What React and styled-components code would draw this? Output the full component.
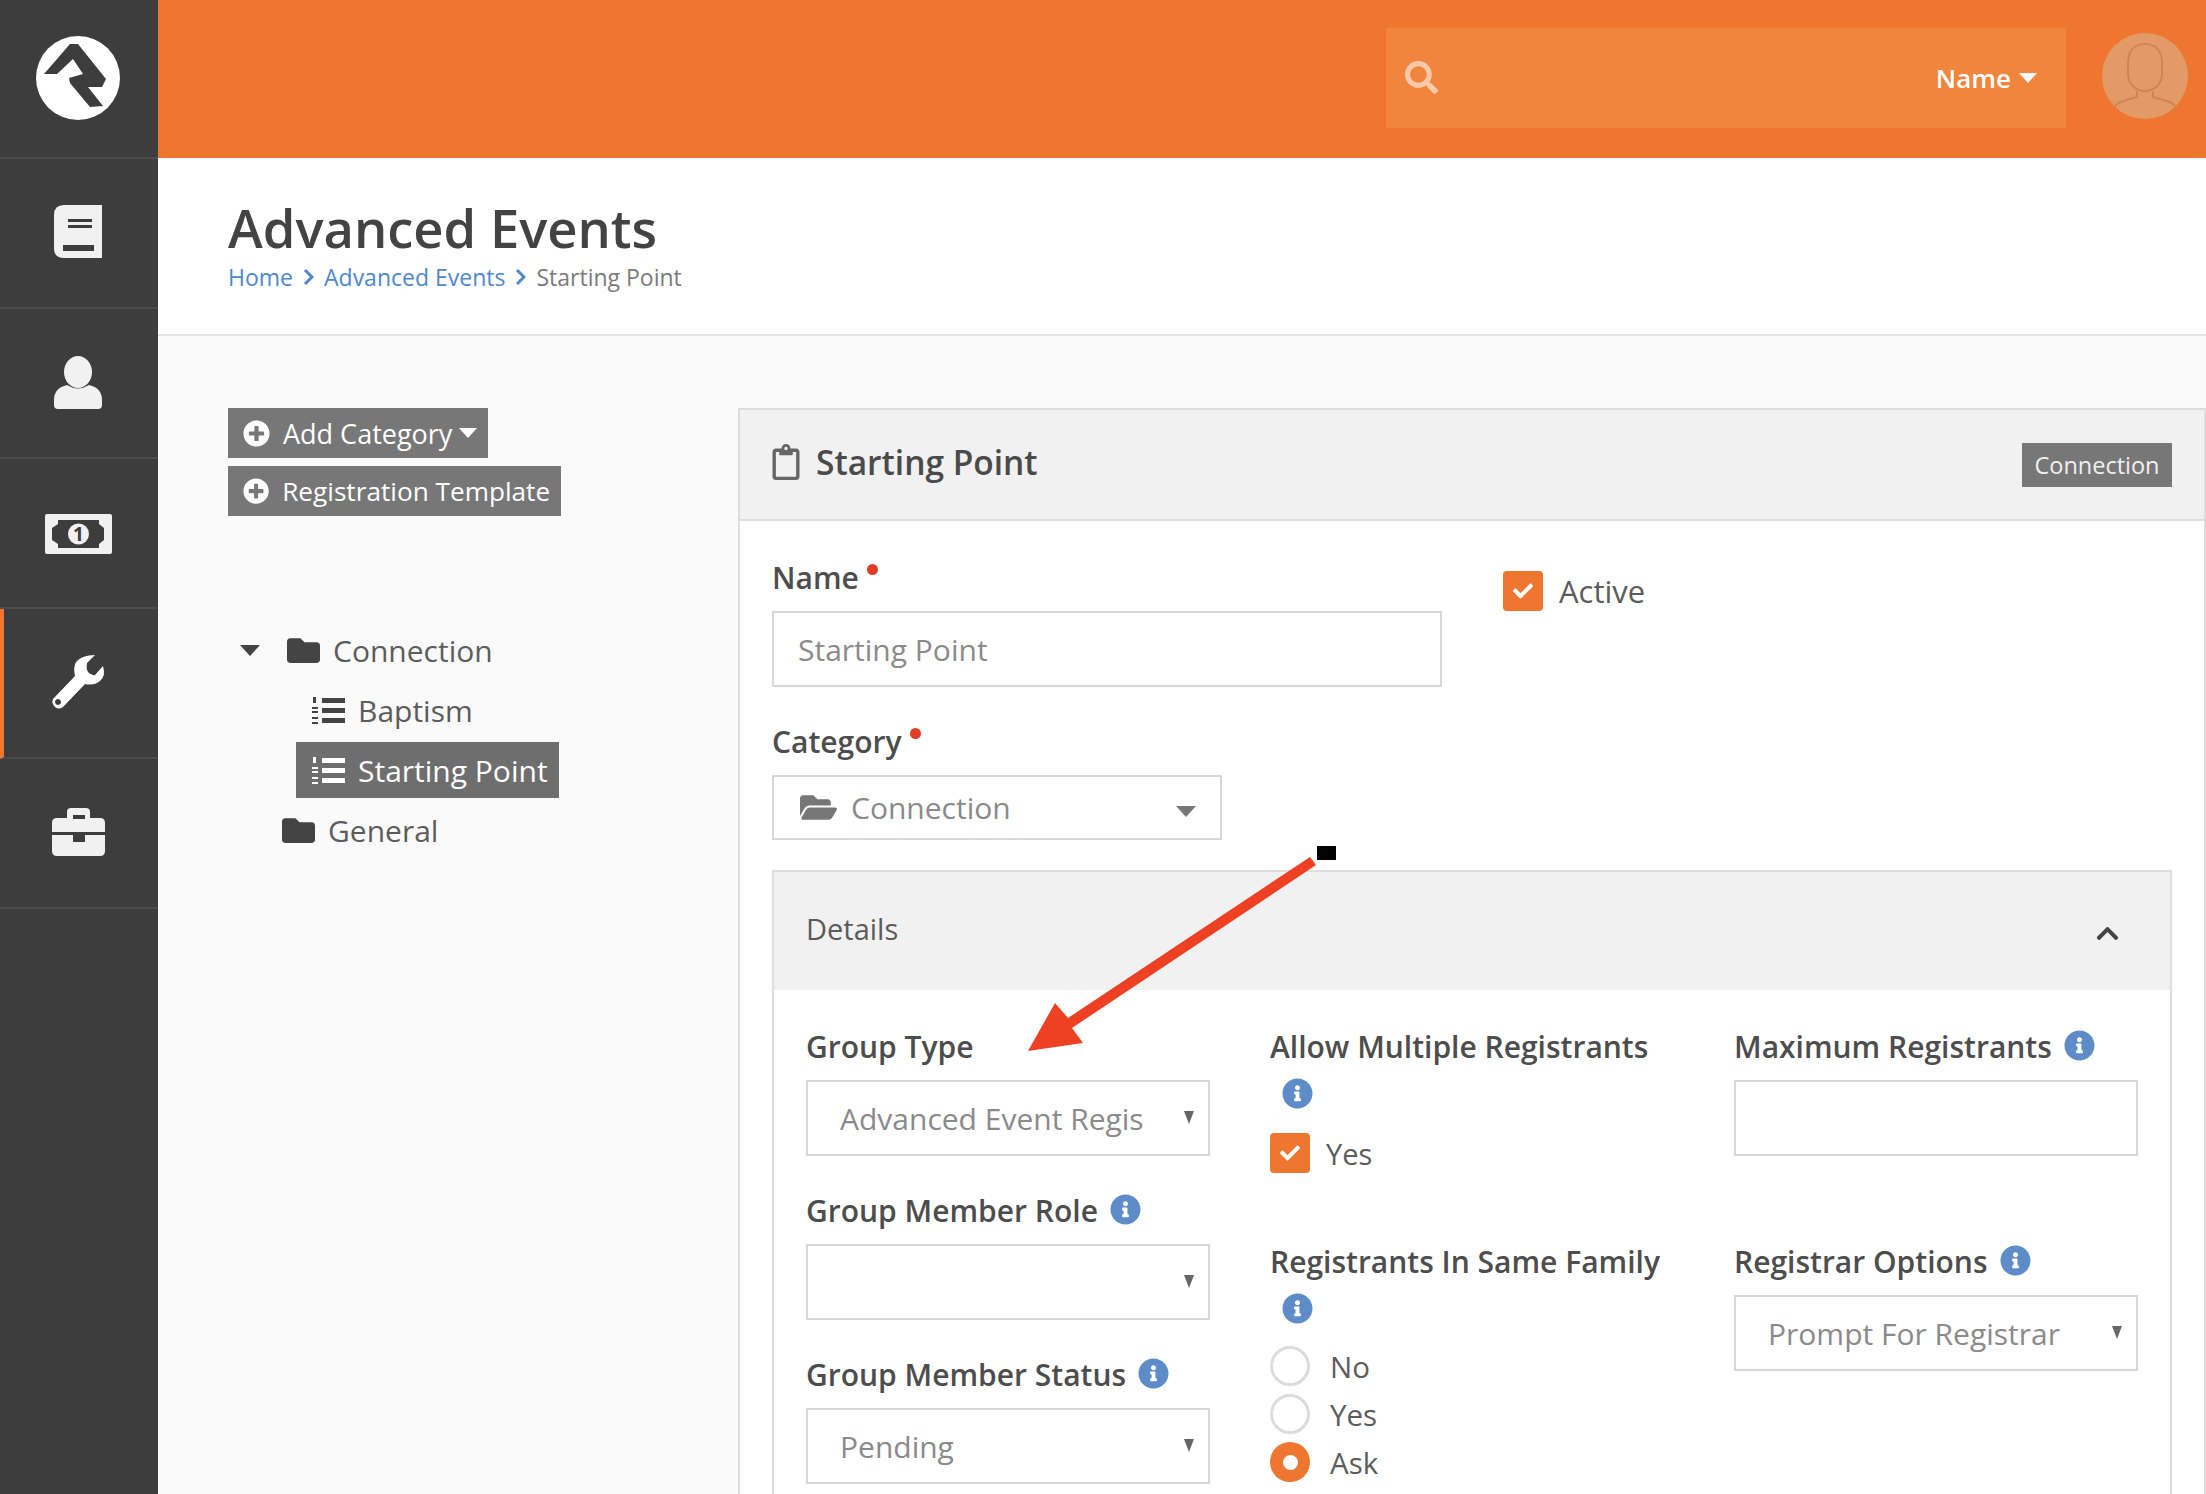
import React from "react";
import styled, { createGlobalStyle } from "styled-components";
import {
  FaPlusCircle,
  FaFolder,
  FaFolderOpen,
  FaSearch,
  FaInfoCircle,
  FaCheck,
  FaRegClipboard,
  FaChevronUp,
} from "react-icons/fa";

const GlobalStyle = createGlobalStyle`
  html, body {
    margin: 0;
    height: 100%;
    overflow: hidden;
    background: #fafafa;
    font-family: "Open Sans", "Noto Sans", sans-serif;
    color: #4a4a4a;
  }
  * { box-sizing: border-box; }
`;

const Shell = styled.div`
  display: flex;
  height: 100vh;
  overflow: hidden;
`;

const Sidebar = styled.nav`
  width: 158px;
  flex: none;
  background: #3d3d3d;
`;

const NavCell = styled.div`
  height: ${(p) => (p.$logo ? "159px" : "150px")};
  display: flex;
  align-items: center;
  justify-content: center;
  border-bottom: 2px solid #4b4b4b;
  border-left: ${(p) => (p.$active ? "4px solid #ee762f" : "none")};
  padding: ${(p) => p.$pad || "0 0 2px"};
  padding-right: ${(p) => (p.$active ? "7px" : "2px")};
`;

const Main = styled.div`
  flex: 1;
  min-width: 0;
  display: flex;
  flex-direction: column;
`;

const TopBar = styled.header`
  height: 158px;
  flex: none;
  background: #ee762f;
  display: flex;
  align-items: center;
  justify-content: flex-end;
  gap: 36px;
  padding: 0 18px 3px 0;
`;

const SearchBox = styled.div`
  width: 680px;
  height: 100px;
  background: #f2853d;
  display: flex;
  align-items: center;
  justify-content: space-between;
  padding: 0 29px 0 19px;
  color: #f9c9a9;
  font-size: 33px;
`;

const SearchScope = styled.span`
  display: flex;
  align-items: center;
  gap: 8px;
  color: #fff;
  font-size: 26px;
  font-weight: 600;
`;

const Caret = styled.span`
  display: inline-block;
  flex: none;
  width: 0;
  height: 0;
  margin-top: ${(p) => p.$drop || 0}px;
  margin-left: ${(p) => p.$pull || 0}px;
  border-left: ${(p) => p.$size || 9}px solid transparent;
  border-right: ${(p) => p.$size || 9}px solid transparent;
  border-top: ${(p) => (p.$size || 9) + 1}px solid ${(p) => p.$color || "#fff"};
`;

const AvatarSvg = styled.svg`
  flex: none;
  margin-bottom: 3px;
`;

const PageHeader = styled.div`
  height: 178px;
  flex: none;
  background: #fff;
  border-bottom: 2px solid #e4e4e4;
  padding: 40px 0 0 70px;
`;

const PageTitle = styled.h1`
  margin: 0;
  font-size: 52.5px;
  line-height: 60px;
  font-weight: 600;
  color: #434343;
`;

const Breadcrumb = styled.div`
  display: flex;
  align-items: center;
  gap: 10px;
  margin-top: 3px;
  font-size: 23px;
  line-height: 32px;
  color: #7b7b7b;
`;

const Crumb = styled.a`
  color: #4f87cf;
`;

const CrumbSep = styled.svg`
  width: 11px;
  height: 18px;
  fill: none;
  stroke: #4f87cf;
  stroke-width: 3;
`;

const Content = styled.div`
  flex: 1;
  min-height: 0;
  display: flex;
  padding: 72px 0 0 70px;
`;

const LeftColumn = styled.div`
  width: 510px;
  flex: none;
  display: flex;
  flex-direction: column;
  align-items: flex-start;
`;

const ActionButton = styled.div`
  height: 50px;
  display: flex;
  align-items: center;
  gap: 13px;
  padding: 0 11px 0 15px;
  margin-bottom: 8px;
  background: #777;
  color: #fff;
  font-size: ${(p) => p.$size || 26.2}px;
  white-space: nowrap;
`;

const Tree = styled.div`
  margin-top: 98px;
  display: flex;
  flex-direction: column;
  gap: 4px;
`;

const TreeRow = styled.div`
  height: 56px;
  align-self: flex-start;
  display: flex;
  align-items: center;
  gap: 13px;
  margin-left: ${(p) => p.$indent || 0}px;
  padding: ${(p) => (p.$selected ? "0 11px 0 16px" : "0")};
  background: ${(p) => (p.$selected ? "#6e6e6e" : "transparent")};
  color: ${(p) => (p.$selected ? "#fff" : "#5c5c5c")};
  font-size: 30px;
  svg { flex: none; font-size: 33px; color: ${(p) => (p.$selected ? "#fff" : "#444")}; }
`;

const TreeToggle = styled.span`
  width: 47px;
  margin-right: -13px;
  display: flex;
`;

const Panel = styled.section`
  flex: 1;
  min-width: 0;
  border: 2px solid #ddd;
  border-bottom: none;
  background: #fff;
`;

const PanelHeader = styled.div`
  height: 111px;
  display: flex;
  align-items: center;
  justify-content: space-between;
  padding: 0 32px 0 28px;
  background: #f1f1f1;
  border-bottom: 2px solid #ddd;
`;

const PanelTitle = styled.h2`
  margin: 0 0 5px;
  display: flex;
  align-items: center;
  gap: 12px;
  font-size: 33.5px;
  font-weight: 600;
  color: #4a4a4a;
  svg { font-size: 36px; font-weight: 400; color: #666; }
`;

const Badge = styled.span`
  width: 150px;
  height: 44px;
  display: flex;
  align-items: center;
  justify-content: center;
  background: #777;
  color: #f0f0f0;
  font-size: 23.5px;
`;

const PanelBody = styled.div`
  padding: 36px 32px 0;
`;

const TopRow = styled.div`
  display: flex;
  gap: 61px;
`;

const Field = styled.div`
  width: ${(p) => p.$width || "100%"};
  margin-top: ${(p) => p.$top || 0}px;
`;

const Label = styled.label`
  display: flex;
  align-items: center;
  gap: 12px;
  height: 40px;
  margin-bottom: 14px;
  font-size: 30px;
  font-weight: 600;
  color: #4d4d4d;
  white-space: nowrap;
`;

const Required = styled.span`
  width: 11px;
  height: 11px;
  margin: -16px 0 0 -4px;
  border-radius: 50%;
  background: #e03c26;
`;

const TextInput = styled.input`
  display: block;
  width: 100%;
  height: ${(p) => p.$height || 76}px;
  padding: 0 24px;
  border: 2px solid #d8d8d8;
  background: #fff;
  font: inherit;
  font-size: 30px;
  color: #8a8a8a;
  outline: none;
`;

const SelectBox = styled.div`
  height: ${(p) => p.$height || 76}px;
  display: flex;
  align-items: center;
  justify-content: space-between;
  gap: 14px;
  padding: 0 ${(p) => p.$right || 14}px 0 ${(p) => p.$left || 32}px;
  border: 2px solid #d8d8d8;
  background: #fff;
  font-size: 30px;
  color: #8a8a8a;
  white-space: nowrap;
  svg { flex: none; font-size: 37px; color: #777; }
`;

const SelectValue = styled.span`
  flex: 1;
`;

const NativeArrow = styled.span`
  width: 0;
  height: 0;
  margin-top: -2px;
  border-left: 5px solid transparent;
  border-right: 5px solid transparent;
  border-top: 13px solid #666;
`;

const CheckRow = styled.div`
  display: flex;
  align-items: center;
  align-self: flex-start;
  gap: 16px;
  margin-top: ${(p) => p.$top || 0}px;
  font-size: ${(p) => p.$size || 29}px;
  color: #5c5c5c;
`;

const CheckBox = styled.span`
  width: 40px;
  height: 40px;
  display: flex;
  align-items: center;
  justify-content: center;
  border-radius: 4px;
  background: #ee762f;
  color: #fff;
  font-size: 20px;
`;

const Details = styled.div`
  margin-top: 30px;
  border: 2px solid #ddd;
  border-bottom: none;
`;

const DetailsHeader = styled.div`
  height: 118px;
  display: flex;
  align-items: center;
  justify-content: space-between;
  padding: 0 50px 5px 32px;
  background: #f1f1f1;
  font-size: 29px;
  color: #5a5a5a;
  svg { margin-top: 9px; font-size: 25px; color: #444; }
`;

const DetailsBody = styled.div`
  display: grid;
  grid-template-columns: repeat(3, 404px);
  column-gap: 60px;
  padding: 36px 32px 60px;
`;

const Column = styled.div`
  min-width: 0;
`;

const InfoLine = styled.div`
  height: 32px;
  margin: ${(p) => p.$top || 0}px 0 0 12px;
  display: flex;
  align-items: center;
`;

const Info = styled(FaInfoCircle)`
  flex: none;
  font-size: 31px;
  color: #5d8cc8;
  margin-top: -2px;
`;

const RadioRow = styled.div`
  display: flex;
  align-items: center;
  gap: 20px;
  height: 40px;
  margin-top: ${(p) => p.$top || 8}px;
  font-size: 29.5px;
  color: #5c5c5c;
`;

const Radio = styled.span`
  width: 40px;
  height: 40px;
  display: flex;
  align-items: center;
  justify-content: center;
  border-radius: 50%;
  border: ${(p) => (p.$on ? "none" : "3px solid #dcdcdc")};
  background: ${(p) => (p.$on ? "#ee762f" : "#fff")};
  &::after {
    content: "";
    display: ${(p) => (p.$on ? "block" : "none")};
    width: 15px;
    height: 15px;
    border-radius: 50%;
    background: #fff;
  }
`;

const Annotation = styled.svg`
  position: absolute;
  top: 0;
  left: 0;
  pointer-events: none;
`;

const Logo = () => (
  <svg width="84" height="84" viewBox="0 0 84 84">
    <circle cx="42" cy="42" r="42" fill="#fff" />
    <path
      fill="#3d3d3d"
      d="M8 38 L34 8 L42 8 L70 43 L66 51 L52 51 L67 70 L54 71 L34 47 L33 42 L47 38 L37 23 L21 38 Z"
    />
  </svg>
);

const BookIcon = () => (
  <svg width="48" height="53" viewBox="0 0 48 53">
    <path fill="#f1f1f1" d="M10 0 H48 V53 H10 Q0 53 0 43 V10 Q0 0 10 0 Z" />
    <rect x="14" y="14" width="24" height="3" fill="#3d3d3d" />
    <rect x="14" y="20" width="24" height="3" fill="#3d3d3d" />
    <rect x="9" y="40" width="31" height="6" fill="#3d3d3d" />
  </svg>
);

const UserIcon = () => (
  <svg width="48" height="53" viewBox="0 0 48 53">
    <ellipse cx="24" cy="16" rx="14" ry="16" fill="#f1f1f1" />
    <path fill="#f1f1f1" d="M0 49 V44 Q0 32 13 29 Q24 36 35 29 Q48 32 48 44 V49 Q48 53 44 53 H4 Q0 53 0 49 Z" />
  </svg>
);

const MoneyIcon = () => (
  <svg width="67" height="40" viewBox="0 0 67 40">
    <rect width="67" height="40" rx="2" fill="#f1f1f1" />
    <path fill="#3d3d3d" d="M13 6 H54 V10 L59 14 V26 L54 30 V34 H13 V30 L7 26 V14 L13 10 Z" />
    <circle cx="33.5" cy="20" r="10.5" fill="#f1f1f1" />
    <text x="33.5" y="27" textAnchor="middle" fontSize="19" fontWeight="700" fill="#3d3d3d" fontFamily="Open Sans, sans-serif">1</text>
  </svg>
);

const WrenchIcon = () => (
  <svg width="56" height="56" viewBox="0 0 56 56">
    <path
      fill="#fff"
      fillRule="evenodd"
      d="M3 45 L25 22 Q23 14 26 8 Q32 1 45 1 L37 9 Q36 15 38 18 Q42 22 45 21 L53 12 Q56 22 50 27 Q44 32 35 30 L13 53 Q9 56 5 53 Q1 49 3 45 Z M8 45 a3 3 0 1 0 0.01 0 Z"
    />
  </svg>
);

const BriefcaseIcon = () => (
  <svg width="53" height="48" viewBox="0 0 53 48">
    <path fill="#f1f1f1" d="M15 10 V4 Q15 0 19 0 H34 Q38 0 38 4 V10 H48 Q53 10 53 15 V24 H0 V15 Q0 10 5 10 Z" />
    <rect x="21" y="7" width="12" height="4" fill="#3d3d3d" />
    <path fill="#f1f1f1" d="M0 27 H21 V34 H33 V27 H53 V43 Q53 48 48 48 H5 Q0 48 0 43 Z" />
    <rect x="21" y="24" width="12" height="10" fill="#3d3d3d" />
  </svg>
);

const ListIcon = () => (
  <svg width="33" height="27" viewBox="0 0 33 27" fill="currentColor">
    <rect x="10" y="1" width="23" height="5" />
    <rect x="10" y="11" width="23" height="5" />
    <rect x="10" y="21" width="23" height="5" />
    <rect x="1" y="0" width="3" height="6" />
    <rect x="0" y="10" width="6" height="2" />
    <rect x="0" y="14" width="6" height="2" />
    <rect x="0" y="20" width="6" height="2" />
    <rect x="0" y="25" width="6" height="2" />
  </svg>
);

const Avatar = () => (
  <AvatarSvg width="86" height="86" viewBox="0 0 86 86">
    <circle cx="43" cy="43" r="43" fill="#e29a67" />
    <g fill="none" stroke="#cf8555" strokeWidth="2">
      <path d="M26 30 C26 16 34 11 43 11 C52 11 60 16 60 30 V41 C60 51 52 58 43 58 C34 58 26 51 26 41 Z" />
      <path d="M35 58 V64 L18 69 Q14 71 12 74" />
      <path d="M51 58 V64 L68 69 Q72 71 74 74" />
    </g>
  </AvatarSvg>
);

const App = () => {
  return (
    <Shell>
      <GlobalStyle />
      <Sidebar>
        <NavCell $logo>
          <Logo />
        </NavCell>
        <NavCell $pad="0 0 4px">
          <BookIcon />
        </NavCell>
        <NavCell>
          <UserIcon />
        </NavCell>
        <NavCell $pad="2px 0 0">
          <MoneyIcon />
        </NavCell>
        <NavCell $active>
          <WrenchIcon />
        </NavCell>
        <NavCell>
          <BriefcaseIcon />
        </NavCell>
      </Sidebar>
      <Main>
        <TopBar>
          <SearchBox>
            <FaSearch />
            <SearchScope>
              Name <Caret />
            </SearchScope>
          </SearchBox>
          <Avatar />
        </TopBar>
        <PageHeader>
          <PageTitle>Advanced Events</PageTitle>
          <Breadcrumb>
            <Crumb>Home</Crumb>
            <CrumbSep viewBox="0 0 11 18">
              <path d="M2 2 L9 9 L2 16" />
            </CrumbSep>
            <Crumb>Advanced Events</Crumb>
            <CrumbSep viewBox="0 0 11 18">
              <path d="M2 2 L9 9 L2 16" />
            </CrumbSep>
            <span>Starting Point</span>
          </Breadcrumb>
        </PageHeader>
        <Content>
          <LeftColumn>
            <ActionButton $size={27}>
              <FaPlusCircle />
              Add Category
              <Caret $pull={-6} />
            </ActionButton>
            <ActionButton>
              <FaPlusCircle />
              Registration Template
            </ActionButton>
            <Tree>
              <TreeRow $indent={12}>
                <TreeToggle>
                  <Caret $color="#444" $size={10} />
                </TreeToggle>
                <FaFolder />
                Connection
              </TreeRow>
              <TreeRow $indent={84}>
                <ListIcon />
                Baptism
              </TreeRow>
              <TreeRow $indent={68} $selected>
                <ListIcon />
                Starting Point
              </TreeRow>
              <TreeRow $indent={54}>
                <FaFolder />
                General
              </TreeRow>
            </Tree>
          </LeftColumn>
          <Panel>
            <PanelHeader>
              <PanelTitle>
                <FaRegClipboard />
                Starting Point
              </PanelTitle>
              <Badge>Connection</Badge>
            </PanelHeader>
            <PanelBody>
              <TopRow>
                <Field $width="670px">
                  <Label>
                    Name <Required />
                  </Label>
                  <TextInput defaultValue="Starting Point" />
                </Field>
                <CheckRow $top={13} $size={31}>
                  <CheckBox>
                    <FaCheck />
                  </CheckBox>
                  Active
                </CheckRow>
              </TopRow>
              <Field $width="450px" $top={34}>
                <Label>
                  Category <Required />
                </Label>
                <SelectBox $height={65} $left={26} $right={24}>
                  <FaFolderOpen />
                  <SelectValue>Connection</SelectValue>
                  <Caret $color="#777" $size={10} $drop={7} />
                </SelectBox>
              </Field>
              <Details>
                <DetailsHeader>
                  Details
                  <FaChevronUp />
                </DetailsHeader>
                <DetailsBody>
                  <Column>
                    <Field>
                      <Label>Group Type</Label>
                      <SelectBox>
                        <SelectValue>Advanced Event Regis</SelectValue>
                        <NativeArrow />
                      </SelectBox>
                    </Field>
                    <Field $top={34}>
                      <Label>
                        Group Member Role <Info />
                      </Label>
                      <SelectBox>
                        <SelectValue />
                        <NativeArrow />
                      </SelectBox>
                    </Field>
                    <Field $top={34}>
                      <Label>
                        Group Member Status <Info />
                      </Label>
                      <SelectBox>
                        <SelectValue>Pending</SelectValue>
                        <NativeArrow />
                      </SelectBox>
                    </Field>
                  </Column>
                  <Column>
                    <Label as="div">Allow Multiple Registrants</Label>
                    <InfoLine $top={-2}>
                      <Info />
                    </InfoLine>
                    <CheckRow $top={23}>
                      <CheckBox>
                        <FaCheck />
                      </CheckBox>
                      Yes
                    </CheckRow>
                    <Field $top={68}>
                      <Label as="div">Registrants In Same Family</Label>
                      <InfoLine $top={-2}>
                        <Info />
                      </InfoLine>
                      <RadioRow $top={21}>
                        <Radio />
                        No
                      </RadioRow>
                      <RadioRow>
                        <Radio />
                        Yes
                      </RadioRow>
                      <RadioRow>
                        <Radio $on />
                        Ask
                      </RadioRow>
                    </Field>
                  </Column>
                  <Column>
                    <Field>
                      <Label>
                        Maximum Registrants <Info />
                      </Label>
                      <TextInput />
                    </Field>
                    <Field $top={85}>
                      <Label>
                        Registrar Options <Info />
                      </Label>
                      <SelectBox>
                        <SelectValue>Prompt For Registrar</SelectValue>
                        <NativeArrow />
                      </SelectBox>
                    </Field>
                  </Column>
                </DetailsBody>
              </Details>
            </PanelBody>
          </Panel>
        </Content>
      </Main>
      <Annotation width="2206" height="1494" viewBox="0 0 2206 1494">
        <rect x="1317" y="846" width="19" height="14" fill="#000" />
        <path
          fill="#ee4023"
          d="M1310 857 L1316 865 L1072 1028 L1083 1043 L1028 1051 L1055 1003 L1068 1018 Z"
        />
      </Annotation>
    </Shell>
  );
};

export default App;
